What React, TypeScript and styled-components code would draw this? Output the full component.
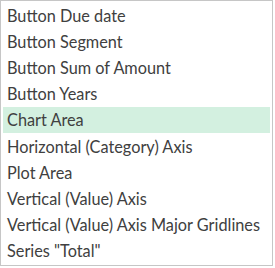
import React from 'react';
import styled, { createGlobalStyle } from 'styled-components';

const GlobalStyle = createGlobalStyle`
  html, body {
    margin: 0;
    padding: 0;
    background: #ffffff;
  }
`;

const Frame = styled.div`
  width: 273px;
  height: 266px;
  box-sizing: border-box;
  border: 1px solid #c6c6c6;
  background: #ffffff;
  padding: 1px 2px 0 2px;
`;

const List = styled.ul`
  list-style: none;
  margin: 0;
  padding: 0;
`;

const Item = styled.li<{ selected?: boolean }>`
  height: 26.2px;
  display: flex;
  align-items: center;
  padding-left: 4px;
  font-family: Lato, "Open Sans", sans-serif;
  font-size: 16.3px;
  color: #404040;
  white-space: nowrap;
  background: ${p => (p.selected ? '#d3f0e0' : 'transparent')};
`;

const items = [
  'Button Due date',
  'Button Segment',
  'Button Sum of Amount',
  'Button Years',
  'Chart Area',
  'Horizontal (Category) Axis',
  'Plot Area',
  'Vertical (Value) Axis',
  'Vertical (Value) Axis Major Gridlines',
  'Series "Total"',
];

const App: React.FC = () => {
  return (
    <>
      <GlobalStyle />
      <Frame>
        <List>
          {items.map((label, i) => (
            <Item key={label} selected={i === 4}>
              {label}
            </Item>
          ))}
        </List>
      </Frame>
    </>
  );
};

export default App;
